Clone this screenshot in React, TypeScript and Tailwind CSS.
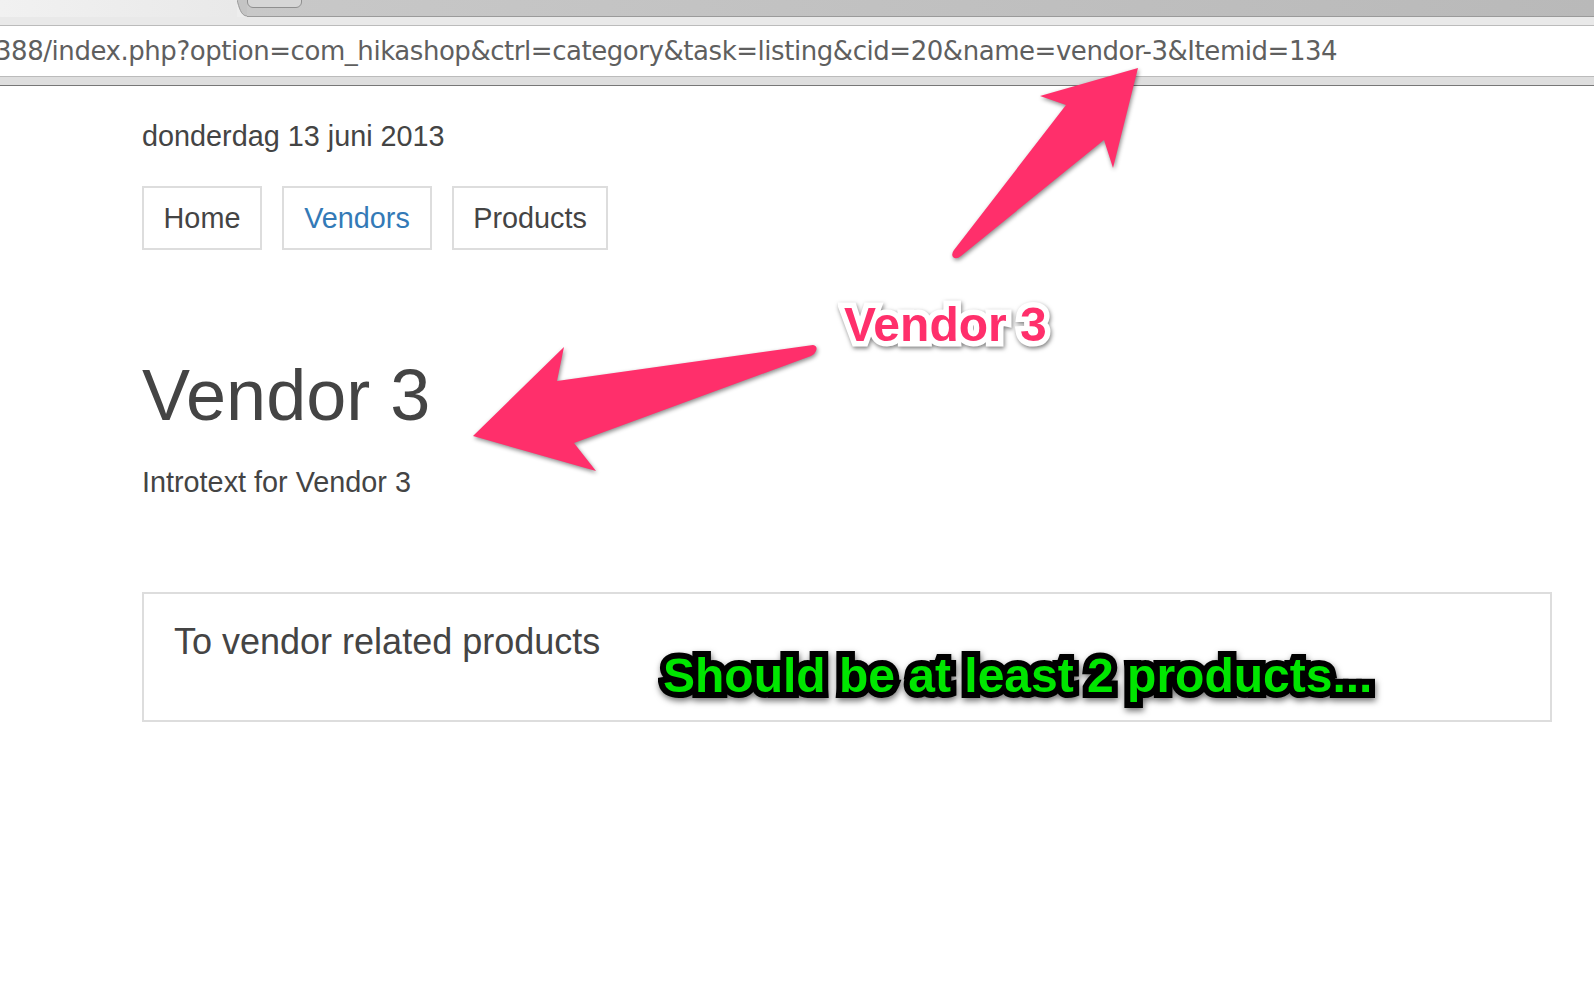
const navItems = [
  { label: "Home", active: false, width: "w-[120px]" },
  { label: "Vendors", active: true, width: "w-[150px]" },
  { label: "Products", active: false, width: "w-[156px]" },
];

// Annotation arrow with the rounded tail, drawn over the page
const Arrow = ({ d }: { d: string }) => (
  <svg
    className="absolute left-0 top-0 drop-shadow-[1px_2px_2px_rgba(0,0,0,0.45)]"
    width={1594}
    height={1002}
    viewBox="0 0 1594 1002"
  >
    <path d={d} fill="#ff2f6b" />
  </svg>
);

const App = () => {
  return (
    <div className="relative h-[1002px] w-[1594px] overflow-hidden bg-white font-['Liberation_Sans',Arial,sans-serif] text-[#444]">
      {/* Browser chrome */}
      <div className="flex h-[17px] bg-[#ededed]">
        <div className="w-[237px] bg-linear-to-r from-[#f1f1f1] to-[#e9e9e9]" />
        <svg width={10} height={17} viewBox="0 0 10 17">
          <path d="M0 0 C2 7 4 16 10 16 L10 17 L10 0 Z" fill="#c4c4c4" />
          <path d="M0 0 C2 7 4 16 10 16" fill="none" stroke="#9a9a9a" />
        </svg>
        <div className="relative flex-1 border-b border-[#9a9a9a] bg-linear-to-r from-[#c8c8c8] to-[#b9b9b9]">
          <div className="absolute left-[0px] top-[-2px] h-[10px] w-[55px] rounded-b-[6px] border border-[#8f8f8f] bg-[#d6d6d6]" />
        </div>
      </div>
      <div className="h-[9px] border-b border-[#bbb] bg-[#e9e9e9]" />
      <div className="flex h-[50px] items-center overflow-hidden bg-white">
        <span className="ml-[-5px] whitespace-nowrap font-['DejaVu_Sans',sans-serif] text-[26px] tracking-[-0.45px] text-[#5f5f5f]">
          388/index.php?option=com_hikashop&amp;ctrl=category&amp;task=listing&amp;cid=20&amp;name=vendor-3&amp;Itemid=134
        </span>
      </div>
      <div className="h-[10px] border-t border-b border-t-[#bbb] border-b-[#777] bg-[#dedede]" />

      {/* Page */}
      <div className="pl-[142px] pr-[42px] pt-[32px]">
        <p className="text-[28.8px] leading-[36px]">donderdag 13 juni 2013</p>

        <nav className="mt-[32px] flex gap-[20px]">
          {navItems.map((item) => (
            <a
              key={item.label}
              className={`flex h-[64px] items-center justify-center border-2 border-[#ddd] pt-[2px] text-[28.8px] ${item.width} ${
                item.active ? "text-[#337ab7]" : "text-[#444]"
              }`}
            >
              {item.label}
            </a>
          ))}
        </nav>

        <h1 className="mt-[104px] text-[72px] leading-[82px]">Vendor 3</h1>
        <p className="mt-[28px] text-[28.8px] leading-[36px]">Introtext for Vendor 3</p>

        <div className="mt-[92px] h-[130px] border-2 border-[#ddd] pl-[30px] pt-[26px]">
          <h3 className="text-[36px] leading-[44px]">To vendor related products</h3>
        </div>
      </div>

      {/* Annotations */}
      <Arrow d="M1138 68 L1113 168 L1104 140 L961 256 Q956 260 953 257 Q951 254 954 250 L1066 105 L1040 96 Z" />
      <Arrow d="M813 345 Q818 346 816 351 Q815 354 811 356 L574 443 L596 471 L473 436 L564 347 L557 381 Z" />
      <span className="absolute left-[844px] top-[298px] whitespace-nowrap text-[48px] font-bold leading-[54px] text-[#ff2f6b] [-webkit-text-stroke:11px_white] [paint-order:stroke_fill] drop-shadow-[1px_2px_2px_rgba(0,0,0,0.5)]">
        Vendor 3
      </span>
      <span className="absolute left-[663px] top-[648px] whitespace-nowrap text-[48px] font-bold leading-[56px] text-[#00e600] [-webkit-text-stroke:12px_black] [paint-order:stroke_fill] drop-shadow-[1px_3px_3px_rgba(0,0,0,0.55)]">
        Should be at least 2 products...
      </span>
    </div>
  );
};

export default App;
